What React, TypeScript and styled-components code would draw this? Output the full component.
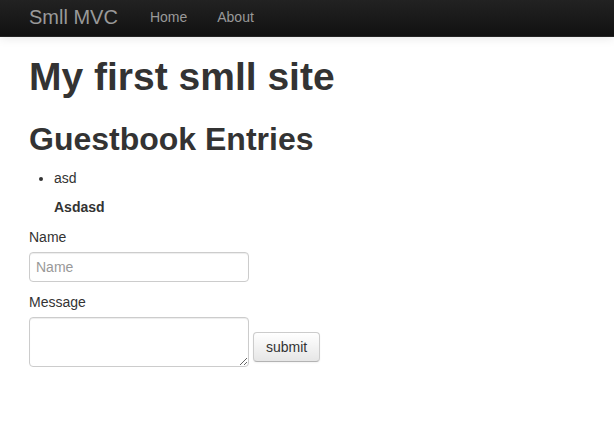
import styled, { createGlobalStyle } from "styled-components";

const GlobalStyle = createGlobalStyle`
  html, body {
    margin: 0;
    padding: 0;
    background: #ffffff;
  }
  body {
    font-family: "Liberation Sans", Arial, Helvetica, sans-serif;
    font-size: 14px;
    line-height: 20px;
    color: #333333;
  }
`;

const Navbar = styled.div`
  height: 36px;
  background: linear-gradient(to bottom, #222222, #111111);
  border-bottom: 1px solid #252525;
  box-shadow: 0 1px 10px rgba(0, 0, 0, 0.1);
  display: flex;
  align-items: flex-start;
  padding-left: 29px;
`;

const Brand = styled.a`
  display: block;
  padding: 7px 17px 0 0;
  font-size: 20px;
  line-height: 20px;
  color: #999999;
  text-decoration: none;
`;

const NavList = styled.ul`
  display: flex;
  list-style: none;
  margin: 0;
  padding: 0;
`;

const NavLink = styled.a`
  display: block;
  padding: 7px 15px 0;
  font-size: 14px;
  line-height: 20px;
  color: #999999;
  text-decoration: none;
`;

const Container = styled.div`
  padding: 20px 29px 0;
`;

const Title = styled.h1`
  margin: 0;
  font-size: 39px;
  line-height: 40px;
  font-weight: bold;
  color: #333333;
`;

const SubTitle = styled.h2`
  margin: 22px 0 0;
  font-size: 32px;
  line-height: 40px;
  font-weight: bold;
  color: #333333;
`;

const Entries = styled.ul`
  margin: 9px 0 10px;
  padding-left: 25px;
`;

const EntryMessage = styled.p`
  margin: 9px 0 0;
  font-weight: bold;
`;

const Form = styled.form`
  display: flex;
  flex-direction: column;
  align-items: flex-start;
`;

const Label = styled.label`
  display: block;
  margin-bottom: 5px;
`;

const fieldStyle = `
  box-sizing: border-box;
  width: 220px;
  padding: 4px 6px;
  font-family: "Liberation Sans", Arial, Helvetica, sans-serif;
  font-size: 14px;
  line-height: 20px;
  color: #555555;
  background: #ffffff;
  border: 1px solid #cccccc;
  border-radius: 4px;
  box-shadow: inset 0 1px 1px rgba(0, 0, 0, 0.075);
  outline: none;
  &::placeholder {
    color: #999999;
  }
`;

const TextInput = styled.input`
  ${fieldStyle}
  height: 30px;
  margin-bottom: 10px;
`;

const MessageRow = styled.div`
  display: flex;
  align-items: flex-end;
  gap: 4px;
`;

const TextArea = styled.textarea`
  ${fieldStyle}
  height: 50px;
  display: block;
  margin: 0;
`;

const SubmitButton = styled.button`
  box-sizing: border-box;
  height: 30px;
  margin-bottom: 5px;
  padding: 4px 12px;
  font-family: "Liberation Sans", Arial, Helvetica, sans-serif;
  font-size: 14px;
  line-height: 20px;
  color: #333333;
  background: linear-gradient(to bottom, #ffffff, #e6e6e6);
  border: 1px solid #cccccc;
  border-bottom-color: #b3b3b3;
  border-radius: 4px;
  box-shadow: inset 0 1px 0 rgba(255, 255, 255, 0.2), 0 1px 2px rgba(0, 0, 0, 0.05);
  cursor: pointer;
`;

const App = () => {
  return (
    <>
      <GlobalStyle />
      <Navbar>
        <Brand href="#">Smll MVC</Brand>
        <NavList>
          <li>
            <NavLink href="#">Home</NavLink>
          </li>
          <li>
            <NavLink href="#">About</NavLink>
          </li>
        </NavList>
      </Navbar>
      <Container>
        <Title>My first smll site</Title>
        <SubTitle>Guestbook Entries</SubTitle>
        <Entries>
          <li>
            asd
            <EntryMessage>Asdasd</EntryMessage>
          </li>
        </Entries>
        <Form onSubmit={(e) => e.preventDefault()}>
          <Label htmlFor="name">Name</Label>
          <TextInput id="name" type="text" placeholder="Name" />
          <Label htmlFor="message">Message</Label>
          <MessageRow>
            <TextArea id="message" />
            <SubmitButton type="submit">submit</SubmitButton>
          </MessageRow>
        </Form>
      </Container>
    </>
  );
};

export default App;
